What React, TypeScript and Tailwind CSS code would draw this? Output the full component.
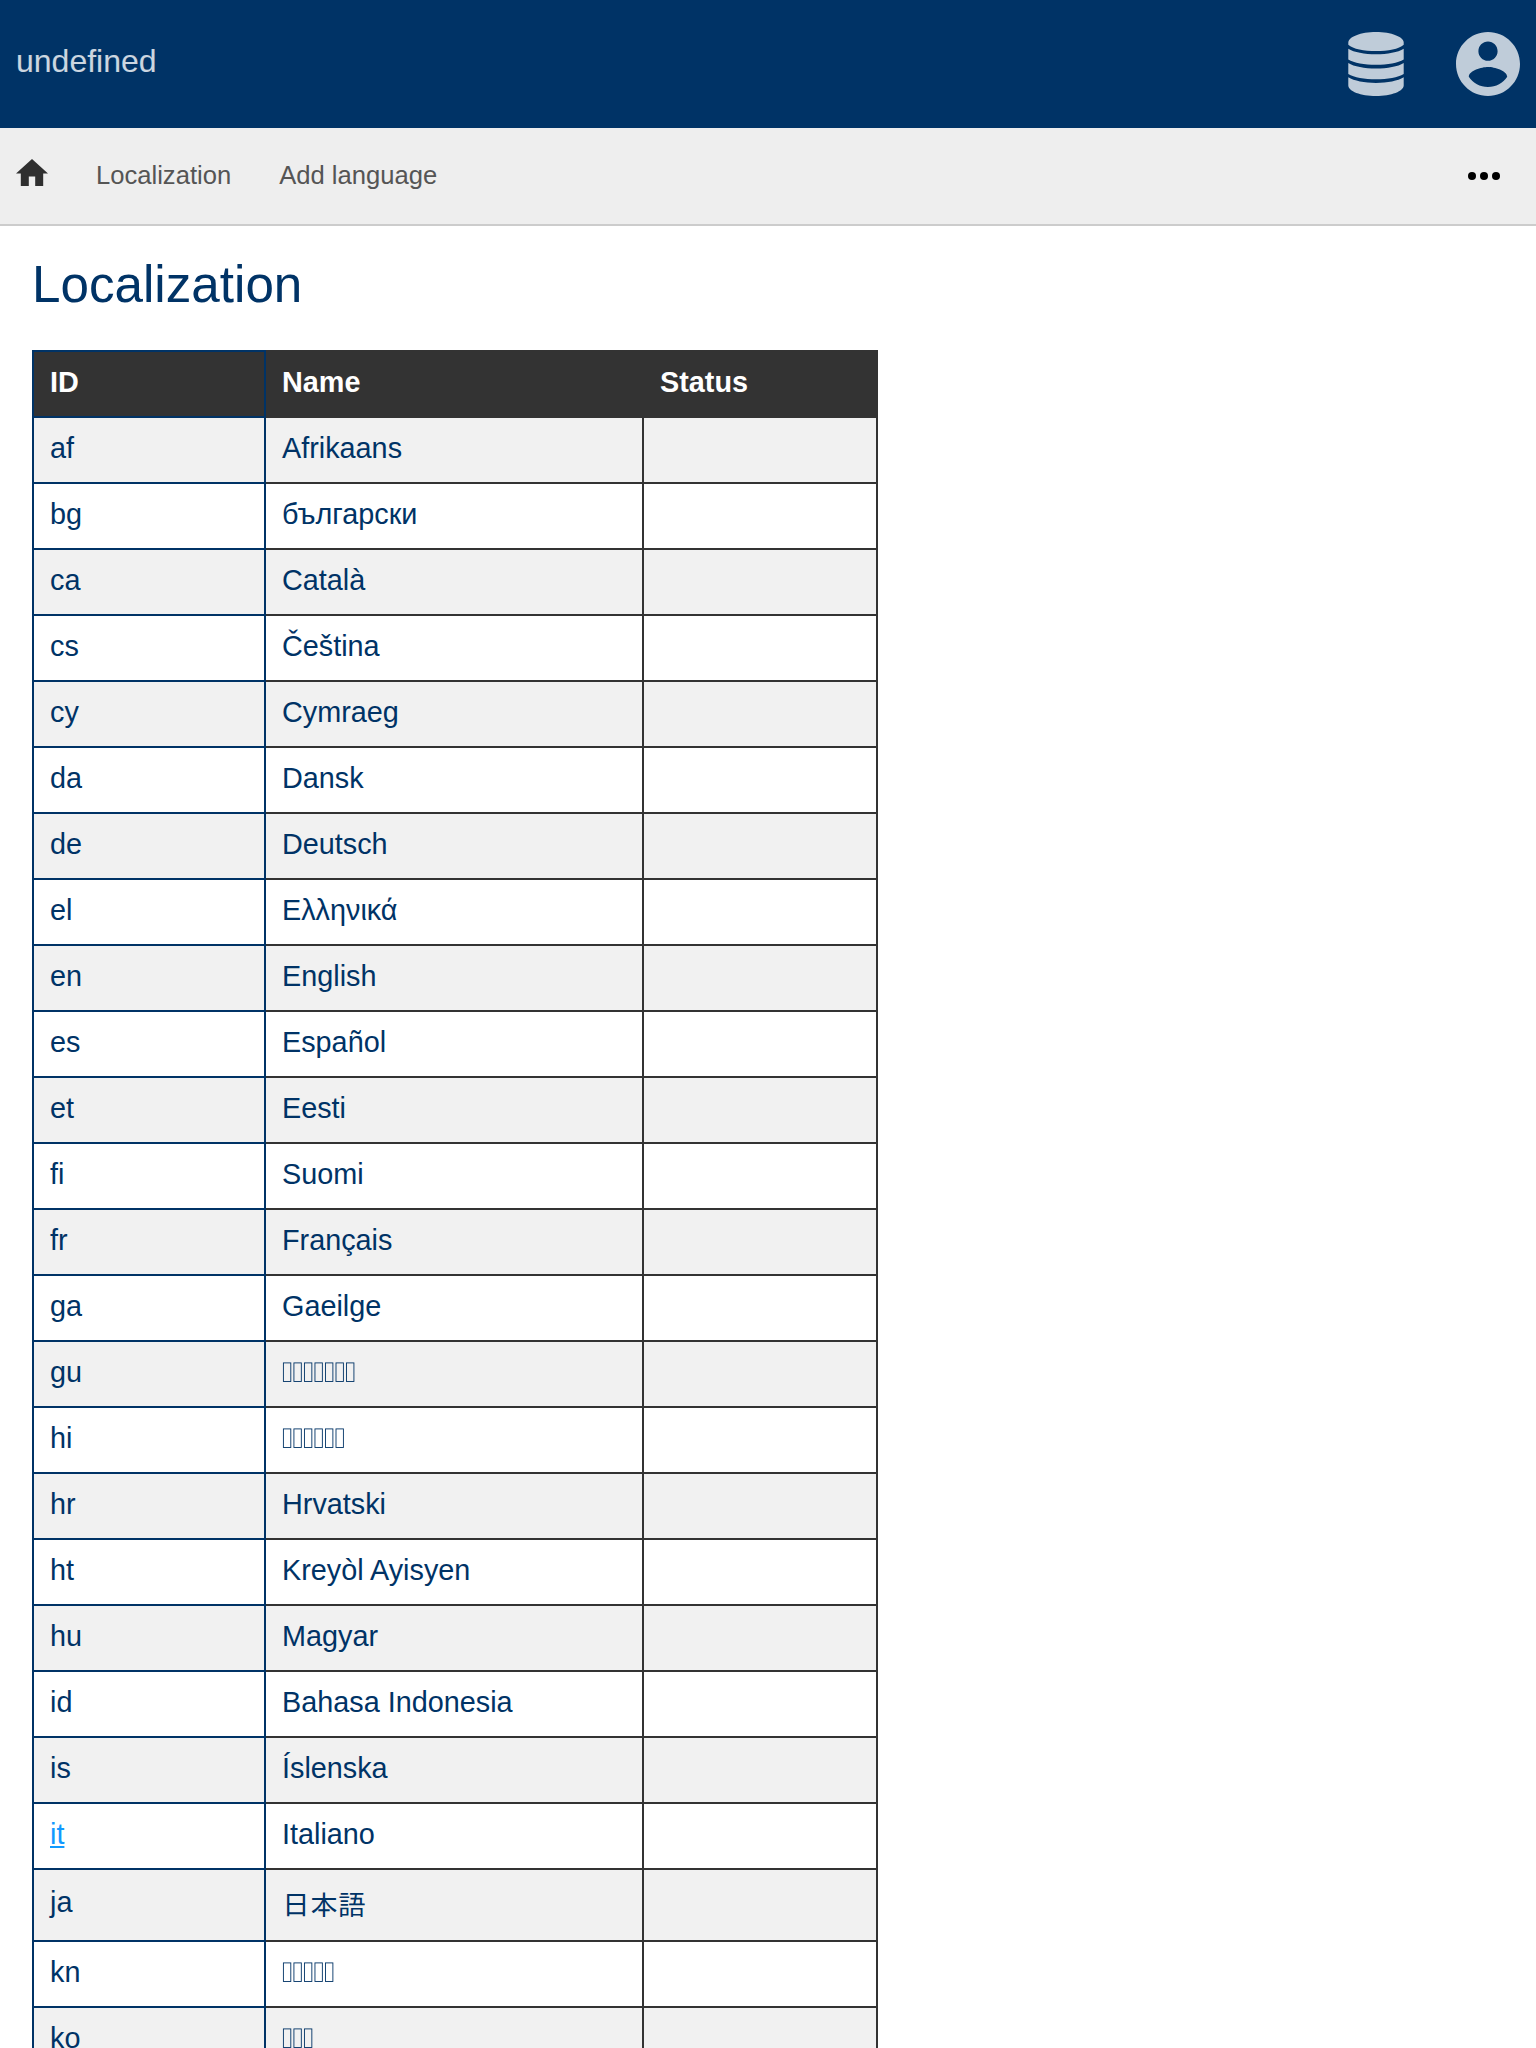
const rows: [string, string][] = [
  ['af', 'Afrikaans'],
  ['bg', 'български'],
  ['ca', 'Català'],
  ['cs', 'Čeština'],
  ['cy', 'Cymraeg'],
  ['da', 'Dansk'],
  ['de', 'Deutsch'],
  ['el', 'Ελληνικά'],
  ['en', 'English'],
  ['es', 'Español'],
  ['et', 'Eesti'],
  ['fi', 'Suomi'],
  ['fr', 'Français'],
  ['ga', 'Gaeilge'],
  ['gu', 'ગુજરાતી'],
  ['hi', 'हिन्दी'],
  ['hr', 'Hrvatski'],
  ['ht', 'Kreyòl Ayisyen'],
  ['hu', 'Magyar'],
  ['id', 'Bahasa Indonesia'],
  ['is', 'Íslenska'],
  ['it', 'Italiano'],
  ['ja', '日本語'],
  ['kn', 'ಕನ್ನಡ'],
  ['ko', '한국어'],
];

// Languages whose script is shown as placeholder boxes, one per character.
const boxed = ['gu', 'hi', 'kn', 'ko'];

function Boxes({ label }: { label: string }) {
  return (
    <svg role="img" aria-label={label} className="block h-5 w-[76px]" viewBox="0 0 76 20" fill="none" stroke="currentColor">
      {Array.from(label).map((_, i) => (
        <rect key={i} x={1.4 + i * 10.52} y="0.9" width="7.400" height="18.600" strokeWidth="0.9" />
      ))}
    </svg>
  );
}

function DatabaseIcon() {
  return (
    <svg className="h-16 w-14" viewBox="0 0 56 64" fill="currentColor">
      <path d="M28 0C43.300 0 55.700 4.800 55.700 10.700V12.700C51 17 40 19 28 19S5 17 0.300 12.700V10.700C0.300 4.800 12.700 0 28 0Z" />
      <path d="M0.300 16.700C6 20.300 16.500 22.200 28 22.200S50 20.300 55.700 16.700V27.500C50 31 39.500 32.800 28 32.800S6 31 0.300 27.500Z" />
      <path d="M0.300 31C6 34.600 16.500 36.500 28 36.500S50 34.600 55.700 31V42C50 45.500 39.500 47.300 28 47.300S6 45.500 0.300 42Z" />
      <path d="M0.300 45.300C6 48.900 16.500 50.900 28 50.900S50 48.900 55.700 45.300V53.500C55.700 59.300 43.300 64 28 64S0.300 59.300 0.300 53.500Z" />
    </svg>
  );
}

function AccountIcon() {
  return (
    <svg className="h-16 w-16" viewBox="2 2 20 20" fill="currentColor">
      <path d="M12 2C6.480 2 2 6.480 2 12s4.480 10 10 10 10-4.480 10-10S17.520 2 12 2zm0 3c1.660 0 3 1.340 3 3s-1.340 3-3 3-3-1.340-3-3 1.340-3 3-3zm0 14.200c-2.500 0-4.710-1.280-6-3.220.030-1.990 4-3.080 6-3.080 1.990 0 5.970 1.090 6 3.080-1.290 1.940-3.500 3.220-6 3.220z" />
    </svg>
  );
}

export default function App() {
  return (
    <div className="h-[2048px] overflow-hidden bg-white font-['Liberation_Sans',IPAGothic,'Noto_Sans_CJK_JP',sans-serif] text-[#003366]">
      <header className="flex h-32 items-center justify-between bg-[#003366] px-4">
        <span className="pb-1.5 text-[32px] leading-[40px] text-white/80">undefined</span>
        <div className="flex items-center gap-[52px] text-[#bfccd9]">
          <DatabaseIcon />
          <AccountIcon />
        </div>
      </header>
      <nav className="flex h-[98px] items-center border-b-2 border-[#ccc] bg-[#eee] text-[25.6px] leading-[30px] text-[#555]">
        <svg className="mb-[7.600px] ml-4 h-[27.2px] w-8 text-[#2f2f2f]" viewBox="2 3 20 17" fill="currentColor">
          <path d="M10 20v-6h4v6h5v-8h3L12 3 2 12h3v8z" />
        </svg>
        <a className="ml-12 pb-0.5">Localization</a>
        <a className="ml-12 pb-0.5">Add language</a>
        <svg className="mr-9 ml-auto h-2 w-8 text-black" viewBox="0 0 32 8" fill="currentColor">
          <circle cx="4" cy="4" r="4" />
          <circle cx="16" cy="4" r="4" />
          <circle cx="28" cy="4" r="4" />
        </svg>
      </nav>
      <main className="px-8 pt-[27px]">
        <h1 className="mb-[33px] text-[51.2px] leading-16">Localization</h1>
        <table className="w-[846px] table-fixed border-separate border-spacing-0 text-left text-[28.8px] leading-[32px]">
          <colgroup>
            <col className="w-[234px]" />
            <col className="w-[378px]" />
            <col className="w-[234px]" />
          </colgroup>
          <thead>
            <tr className="h-[68px] bg-[#333] text-white">
              <th className="border-2 border-[#003366] px-4 pt-0 pb-1">ID</th>
              <th className="border-y-2 border-r-2 border-[#333] px-4 pt-0 pb-1">Name</th>
              <th className="border-y-2 border-r-2 border-[#333] px-4 pt-0 pb-1">Status</th>
            </tr>
          </thead>
          <tbody>
            {rows.map(([id, name]) => (
              <tr key={id} className={id === 'ja' ? 'h-[72px] odd:bg-[#f1f1f1]' : 'h-[66px] odd:bg-[#f1f1f1]'}>
                <td
                  className={
                    id === 'ja'
                      ? 'border-x-2 border-b-2 border-[#003366] px-4 pt-0 pb-1.5'
                      : 'border-x-2 border-b-2 border-[#003366] px-4 pt-0 pb-1'
                  }
                >
                  {id === 'it' ? <a className="text-[#1199ff] underline">{id}</a> : id}
                </td>
                <td
                  className={
                    id === 'ja'
                      ? 'border-r-2 border-b-2 border-[#333] px-4 pt-0.5 pb-0 text-[28px]'
                      : 'border-r-2 border-b-2 border-[#333] px-4 pt-0 pb-1'
                  }
                >
                  {boxed.includes(id) ? <Boxes label={name} /> : name}
                </td>
                <td className="border-r-2 border-b-2 border-[#333] p-0" />
              </tr>
            ))}
          </tbody>
        </table>
      </main>
    </div>
  );
}
